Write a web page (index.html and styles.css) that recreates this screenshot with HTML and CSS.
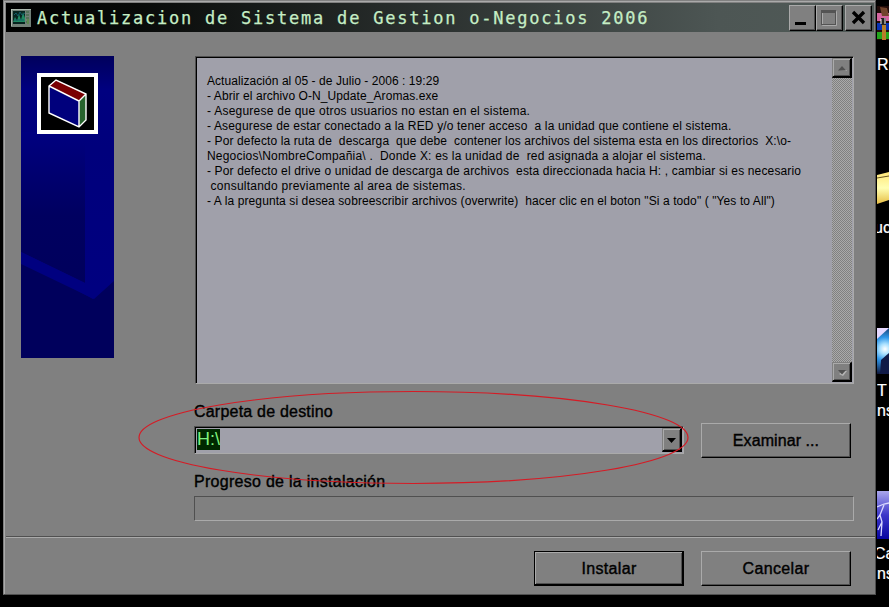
FILE: index.html
```html
<!DOCTYPE html>
<html lang="es">
<head>
<meta charset="utf-8">
<title>Actualizacion de Sistema</title>
<link rel="stylesheet" href="styles.css">
</head>
<body>
<main class="window">
  <header class="titlebar">
    <svg class="app-icon" width="20" height="18" viewBox="0 0 20 18">
      <rect width="20" height="18" fill="#728078"/><path d="M0 17V0H20" fill="none" stroke="#bec9bf" stroke-width="1.5"/>
      <rect x="2" y="2" width="12" height="13" fill="#06241f"/><path d="M2 13l2-5 2 4 2-7 2 6 2-8 2 6v4H2z" fill="#208a62"/>
      <path d="M3 6l2-2 2 3 2-4 2 3 3-2M3 11h10" fill="none" stroke="#135c67"/>
      <path d="M15 3h3M15 6h3M15 9h3M15 13h3" stroke="#35623b"/><path d="M16 10h2v5h-2z" fill="#5f884f"/>
    </svg>
    <h1>Actualizacion de Sistema de Gestion o-Negocios 2006</h1>
    <div class="controls">
      <span class="control"><svg width="24" height="23" viewBox="0 0 24 23"><path d="M5 16h11v3H5z"/></svg></span>
      <span class="control"><svg width="24" height="23" viewBox="0 0 24 23"><path d="M5.500 5.500h14v14h-14z" fill="none" stroke="#aaa"/><path d="M4 4h15v3H4zM4 4h1v14H4zM18 4h1v15h-1zM4 18h15v1H4z" fill="#535353"/></svg></span>
      <span class="control close"><svg width="24" height="23" viewBox="0 0 24 23"><path d="M7 6l11 11M18 6L7 17" fill="none" stroke="#000" stroke-width="3.400"/></svg></span>
    </div>
  </header>
  <section class="content">
    <svg class="banner" width="93" height="302" viewBox="0 0 93 302">
      <defs><linearGradient id="g" x2="0" y2="1"><stop stop-color="#00005c"/><stop offset=".14" stop-color="#000080"/><stop offset=".38" stop-color="#00007c"/><stop offset="1" stop-color="#000080"/></linearGradient>
      <linearGradient id="h" x2="0" y2="1"><stop stop-color="#000080"/><stop offset=".55" stop-color="#000060"/><stop offset="1" stop-color="#00005c"/></linearGradient></defs>
      <path d="M0 0h93v302H0z" fill="#00005c"/>
      <path d="M0 0h93v218L72 243 0 204z" fill="url(#g)"/>
      <path d="M0 76h64v151L0 196z" fill="url(#h)"/>
      <path d="M0 196l64 31 8 3 21-12v7L73 243 0 208z" fill="#000080"/>
      <path d="M16 17h61v61H16z" fill="#fff"/><path d="M20 21h53v53H20z"/>
      <path d="M28 31l30 14v26L28 57z" fill="#00007c"/><path d="M28 30l7-6 30 14-7 7z" fill="#7a0003"/><path d="M58 45l7-7v26l-7 7z" fill="#27632d"/>
      <path d="M28 30l7-6 30 14v26l-7 7-30-14zM28 30l30 15v26M58 45l7-7" fill="none" stroke="#fff" stroke-width="1.4"/>
    </svg>
    <div class="form">
      <div class="notes">
        <div class="copy">
          <p class="l1">Actualización al 05 - de Julio - 2006 : 19:29</p>
          <p class="l2">- Abrir el archivo O-N_Update_Aromas.exe</p>
          <p class="l3">- Asegurese de que otros usuarios no estan en el sistema.</p>
          <p class="l4">- Asegurese de estar conectado a la RED y/o tener acceso  a la unidad que contiene el sistema.</p>
          <p class="l5">- Por defecto la ruta de  descarga  que debe  contener los archivos del sistema esta en los directorios  X:\o-</p>
          <p class="l6">Negocios\NombreCompañia\ .  Donde X: es la unidad de  red asignada a alojar el sistema.</p>
          <p class="l7">- Por defecto el drive o unidad de descarga de archivos  esta direccionada hacia H: , cambiar si es necesario</p>
          <p class="l8"> consultando previamente al area de sistemas.</p>
          <p class="l9">- A la pregunta si desea sobreescribir archivos (overwrite)  hacer clic en el boton "Si a todo" ( "Yes to All")</p>
        </div>
        <div class="scrollbar">
          <span class="arrow"><svg width="17" height="17"><path d="M6 12h8l-1-1z" fill="#b5b5b5"/><path d="M5 11.500l4-4.500 4 4.500z" fill="#505050"/></svg></span>
          <span class="arrow"><svg width="17" height="17"><path d="M6 11l4 2 4-5h-3z" fill="#b5b5b5"/><path d="M5 7h8l-4 4.500z" fill="#505050"/></svg></span>
        </div>
      </div>
      <label class="label dest">Carpeta de destino</label>
      <div class="picker">
        <div class="combo"><span class="selection">H:\</span><span class="drop"><svg width="17" height="20"><path d="M4 9h9l-4.500 5z"/></svg></span></div>
        <button class="button"><span class="t-ex">Examinar ...</span></button>
      </div>
      <label class="label prog">Progreso de la instalación</label>
      <div class="progress"></div>
    </div>
  </section>
  <footer class="actions">
    <button class="button primary"><span class="t-in">Instalar</span></button>
    <button class="button"><span class="t-ca">Cancelar</span></button>
  </footer>
</main>
<aside class="desktop">
  <div class="item i1"><svg width="12" height="34" viewBox="0 0 12 34"><path d="M0 0h12v34H0z" fill="#210c09"/><path d="M0 7h12v8H0z" fill="#d4659f"/><path d="M0 17h12v7H0z" fill="#0832b4"/><path d="M0 26h12v7H0z" fill="#22a51b"/><path d="M3 1l7 1 2 8H5z" fill="#71442c"/><path d="M5 18h4v16H5z" fill="#b77e29"/><path d="M4 12h5v7H4z" fill="#222"/><path d="M4 13v5M8 12v6" stroke="#eee"/></svg><span>R</span></div>
  <div class="item i2"><svg width="12" height="32" viewBox="0 0 12 32"><defs><linearGradient id="y" x2="0" y2="1"><stop stop-color="#ffe779"/><stop offset=".5" stop-color="#ffffb3"/><stop offset="1" stop-color="#e6bd44"/></linearGradient></defs><path d="M0 3l12-3v28L0 32z" fill="url(#y)"/><path d="M0 6l12-2" stroke="#68531f"/></svg><span>uc</span></div>
  <div class="item i3"><svg width="12" height="46" viewBox="0 0 12 46"><defs><radialGradient id="b" gradientUnits="userSpaceOnUse" cx="8" cy="21" r="26"><stop stop-color="#fff"/><stop offset=".2" stop-color="#a8e0ff"/><stop offset=".45" stop-color="#2f96e8"/><stop offset="1" stop-color="#101638"/></radialGradient></defs><path d="M0 0h12v46H0z" fill="url(#b)"/><path d="M0 0h12L0 11z" fill="#e5d9ff"/><path d="M3 46l1-14 8-7v21z" fill="#101a47"/></svg><span>T</span><span>ns</span></div>
  <div class="item i4"><svg width="12" height="48" viewBox="0 0 12 48"><defs><linearGradient id="l" x2="0" y2="1"><stop stop-color="#aaa7ec"/><stop offset=".5" stop-color="#3d37c9"/><stop offset="1" stop-color="#0805a0"/></linearGradient></defs><path d="M0 0h12v48H0z" fill="url(#l)"/><path d="M0 16l7-3 5-1M7 14L3 24l2 7-4 8M3 24l-3 4M5 31l-1 14" fill="none" stroke="#d9d8ff" stroke-width="1.3"/></svg><span>Ca</span><span>ns</span></div>
</aside>
<svg class="ellipse" width="551" height="96" viewBox="0 0 551 96"><ellipse cx="275.500" cy="47.500" rx="274.500" ry="46"/></svg>
</body>
</html>
```
FILE: styles.css
```css
* { box-sizing: border-box; }
body { margin: 0; width: 889px; height: 607px; overflow: hidden; background: #000; display: flex; font-family: "Liberation Sans", Arial, sans-serif; position: relative; }
svg { display: block; }
p, h1 { margin: 0; }
.window { width: 873px; height: 595px; margin-left: 3px; flex: none; background: #808080; border: 1px solid #808080; border-right-color: #505050; border-bottom-color: #505050; box-shadow: inset 1px 1px #aaa; padding: 2px 1px 0 2px; display: flex; flex-direction: column; }
.titlebar { height: 29px; flex: none; background: linear-gradient(90deg, #000 0%, #080a09 15%, #4d5654 82%, #505a57 100%); display: flex; align-items: center; padding: 0 2px 0 5px; }
.app-icon { flex: none; }
h1 { flex: 1; margin-left: 6px; font: 17px/28px "DejaVu Sans Mono", monospace; letter-spacing: 1.77px; color: #c5edc5; white-space: pre; -webkit-text-stroke: .25px #c5edc5; }
.controls { display: flex; }
.control { width: 27px; height: 26px; background: #808080; border: 1px solid #aaa; border-right: 1px solid #000; border-bottom-color: #000; box-shadow: inset -1px -1px #505050; overflow: hidden; }
.close { margin-left: 2px; }
.content { display: flex; padding: 24px 0 0 15px; }
.banner { flex: none; }
.form { width: 660px; margin-left: 80px; }
.notes { width: 659px; height: 328px; margin-left: 1px; display: flex; background: #a0a0aa; border: 1px solid #505050; border-color: #505050 #aaa #aaa #505050; box-shadow: inset 1px 1px #000; padding: 1px; }
.copy { flex: 1; padding: 16px 0 0 10px; font-size: 12px; line-height: 15px; color: #000; }
.copy p { white-space: pre; }
.l1 { letter-spacing: .06px; }
.l2 { letter-spacing: .08px; }
.l3 { letter-spacing: .24px; }
.l4 { letter-spacing: .15px; }
.l5 { letter-spacing: .12px; }
.l6 { letter-spacing: .2px; }
.l7 { letter-spacing: .145px; }
.l8 { letter-spacing: .24px; }
.l9 { letter-spacing: .1px; }
.scrollbar { width: 20px; display: flex; flex-direction: column; justify-content: space-between; background: repeating-conic-gradient(#aaa 0 25%, #808080 0 50%) 0 0 / 2px 2px; }
.arrow, .drop { display: block; width: 20px; height: 20px; background: #808080; border: 1px solid #808080; border-right: 2px solid #000; border-bottom: 2px solid #000; box-shadow: inset 1px 1px #aaa, inset -1px -1px #505050; }
.label { display: block; font-size: 16px; line-height: 18px; white-space: nowrap; color: #000; -webkit-text-stroke: .4px #000; }
.dest { margin-top: 19px; letter-spacing: .21px; }
.picker { display: flex; justify-content: space-between; padding-right: 3px; margin-top: 2px; }
.combo { width: 490px; height: 28px; margin-top: 3px; display: flex; justify-content: space-between; border: 1px solid #505050; border-right-color: #aaa; border-bottom-color: #aaa; box-shadow: inset 1px 1px #000; background: #a0a0aa; padding: 1px; }
.selection { width: 23px; height: 21px; margin: 1px; background: #002800; color: #7ff27f; font-size: 18px; line-height: 21px; }
.drop { height: 24px; }
.button { width: 150px; height: 35px; background: #808080; border: 1px solid #aaa; border-right-color: #000; border-bottom-color: #000; box-shadow: inset -1px -1px #505050; padding: 0; color: #000; font: 16px "Liberation Sans", Arial, sans-serif; -webkit-text-stroke: .4px #000; }
.primary { border: 1px solid #000; box-shadow: inset -1px -1px #000, inset 1px 1px #aaa, inset -2px -2px #505050; }
.prog { margin-top: 15px; letter-spacing: .28px; }
.progress { height: 25px; margin-top: 5px; border: 1px solid #505050; border-right-color: #aaa; border-bottom-color: #aaa; }
.actions { margin: 15px -1px 0 0; padding: 14px 24px 0 0; border-top: 1px solid #505050; box-shadow: inset 0 1px #aaa; display: flex; justify-content: flex-end; gap: 17px; }
.t-ex { letter-spacing: .08px; }
.t-in, .t-ca { letter-spacing: .34px; }
.desktop { flex: 1; margin-left: 1px; overflow: hidden; color: #fff; font-size: 16px; line-height: 20px; }
.item { display: flex; flex-direction: column; height: 165px; }
.item span { -webkit-text-stroke: .2px #fff; }
.i1 { padding-top: 6px; }
.i1 span { margin-top: 15px; }
.i2 { padding-top: 7px; height: 163px; }
.i2 span { margin-top: 14px; margin-left: -3px; }
.i3 span, .i4 span { flex: none; }
.i3 svg + span { margin-top: 7px; }
.i4 { padding-top: 0; margin-top: -2px; }
.i4 svg + span { margin-top: 5px; margin-left: -3px; }
.ellipse { position: absolute; left: 138px; top: 390px; }
.ellipse ellipse { fill: none; stroke: #d51b25; stroke-width: 1.2; }
```
